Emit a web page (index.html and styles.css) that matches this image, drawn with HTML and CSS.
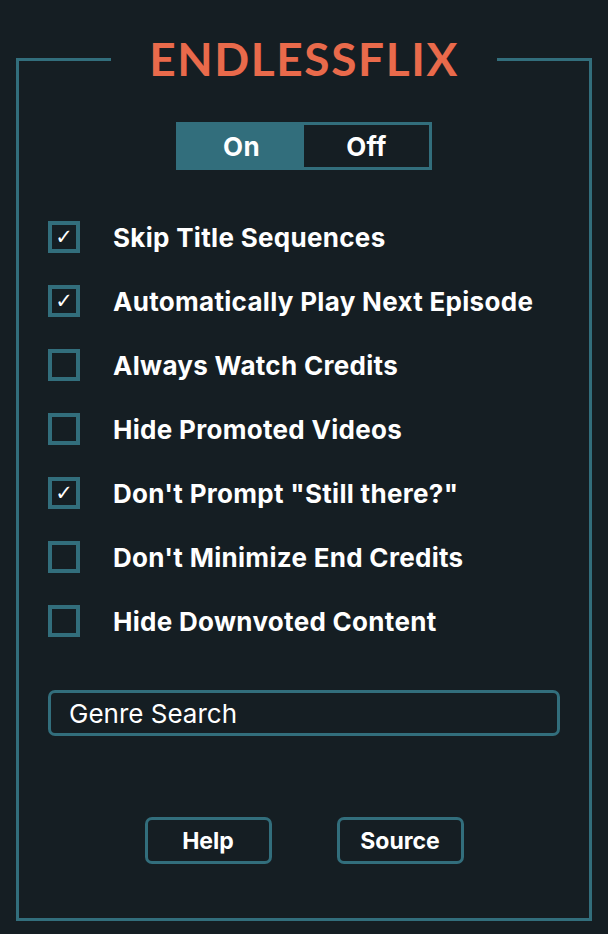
FILE: index.html
```html
<html lang="en">
<head>
    <title>Endlessflix</title>
    <meta http-equiv="Content-Type" content="text/html; charset=utf-8">
    <link rel="stylesheet" href="styles.css">
</head>
<body class="popup">
    <fieldset class="panel">
        <legend class="brand">ENDLESSFLIX</legend>
        <div class="toggle">
            <button class="toggle-btn active">On</button>
            <button class="toggle-btn">Off</button>
        </div>
        <div class="options">
            <label class="option"><span class="box checked">✓</span>Skip Title Sequences</label>
            <label class="option"><span class="box checked">✓</span>Automatically Play Next Episode</label>
            <label class="option"><span class="box"></span>Always Watch Credits</label>
            <label class="option"><span class="box"></span>Hide Promoted Videos</label>
            <label class="option"><span class="box checked">✓</span>Don't Prompt "Still there?"</label>
            <label class="option"><span class="box"></span>Don't Minimize End Credits</label>
            <label class="option"><span class="box"></span>Hide Downvoted Content</label>
        </div>
        <input type="text" class="search" placeholder="Genre Search" spellcheck="false">
        <div class="links">
            <button class="link">Help</button>
            <button class="link">Source</button>
        </div>
    </fieldset>
</body>
</html>
```
FILE: styles.css
```css
body.popup {
    margin: 0;
    padding: 35px 16px 13px 16px;
    background-color: #151e23;
    color: #ffffff;
    font-family: Inter, "Noto Sans", sans-serif;
}
.panel {
    margin: 0;
    padding: 0 29px;
    height: 886px;
    box-sizing: border-box;
    border: 3px solid #326e7c;
    display: flex;
    flex-direction: column;
}
.brand {
    margin: 0 auto;
    padding: 0 38px;
    font-family: Lato, sans-serif;
    font-size: 46px;
    line-height: 48px;
    font-weight: 700;
    color: #e96a4b;
    letter-spacing: 1.6px;
}
.toggle {
    margin: 39px auto 0 auto;
    display: flex;
    border: 3px solid #326e7c;
    width: 256px;
    height: 48px;
    box-sizing: border-box;
}
.toggle-btn {
    flex: 1;
    background: #151e23;
    border: none;
    color: #fff;
    font-family: inherit;
    font-size: 26px;
    font-weight: 700;
    letter-spacing: 0.3px;
    padding: 0;
}
.toggle-btn.active {
    background: #326e7c;
}
.options {
    margin-top: 35px;
    display: flex;
    flex-direction: column;
}
.option {
    height: 64px;
    display: flex;
    align-items: center;
    font-size: 26px;
    font-weight: 700;
    letter-spacing: 0.3px;
}
.box {
    width: 32px;
    height: 32px;
    box-sizing: border-box;
    border: 4px solid #326e7c;
    margin-right: 33px;
    display: flex;
    align-items: center;
    justify-content: center;
    font-size: 21px;
    font-family: "DejaVu Sans", sans-serif;
    font-weight: 700;
    letter-spacing: 0;
}
.search {
    margin-top: 37px;
    height: 46px;
    box-sizing: border-box;
    border: 3px solid #326e7c;
    border-radius: 7px;
    background: #151e23;
    color: #fff;
    padding: 0 18px;
    font-family: inherit;
    font-size: 26px;
}
.search::placeholder {
    color: #ffffff;
}
.links {
    margin-top: 81px;
    display: flex;
    justify-content: center;
    gap: 65px;
}
.link {
    width: 127px;
    height: 47px;
    border: 3px solid #326e7c;
    border-radius: 7px;
    background: #151e23;
    color: #fff;
    font-family: inherit;
    font-size: 23px;
    font-weight: 700;
    padding: 0;
}
```
